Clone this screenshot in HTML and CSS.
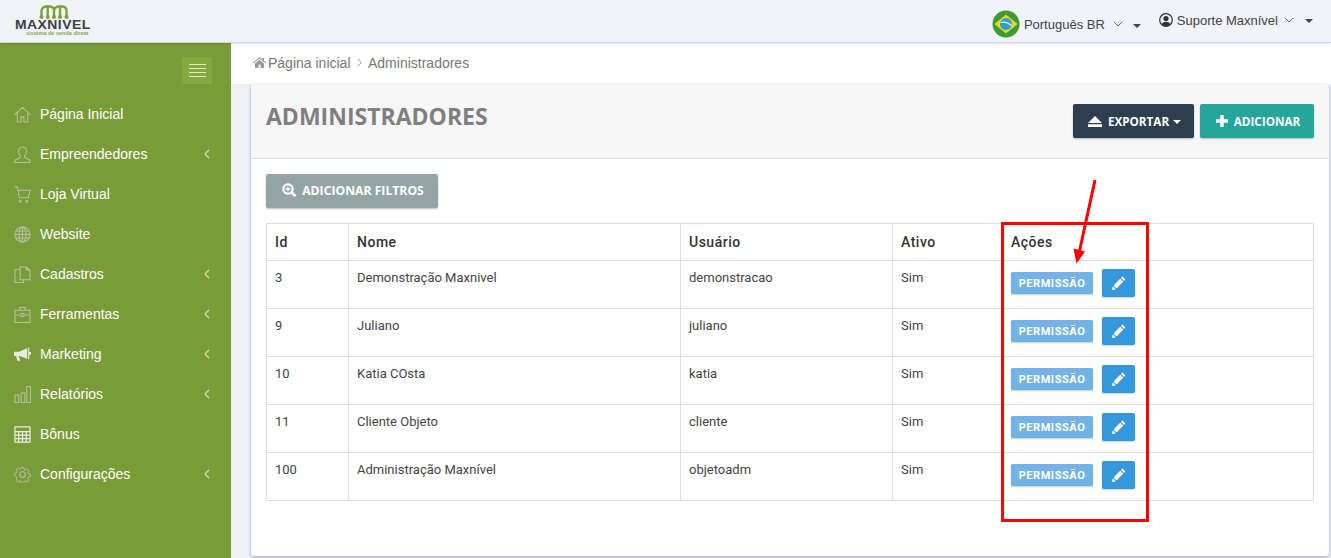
FILE: index.html
```html
<!DOCTYPE html>
<html lang="pt-BR">
<head>
<meta charset="utf-8">
<title>Administradores</title>
<link rel="stylesheet" href="styles.css">
</head>
<body>
<div class="app">
  <header class="topbar">
    <div class="logo">
      <svg class="logo-mark" width="30" height="15" viewBox="0 0 30 15" fill="none" stroke="#7da13a" stroke-width="2.4">
        <path d="M2.500 12V7a4.500 4.500 0 0 1 4.500-4.500h4A4 4 0 0 1 15 7v5M15 7a4.500 4.500 0 0 1 4.500-4.500h3.500A4 4 0 0 1 27.500 7v5M8.700 3v9M21 3v9"/>
        <g fill="#7da13a" stroke="none"><circle cx="2.500" cy="13" r="2"/><circle cx="8.700" cy="13" r="2"/><circle cx="15" cy="13" r="2"/><circle cx="21" cy="13" r="2"/><circle cx="27.500" cy="13" r="2"/></g>
      </svg>
      <div class="logo-name">MAXNIVEL</div>
      <div class="logo-sub">sistema de venda direta</div>
    </div>
    <div class="top-right">
      <div class="lang">
        <svg width="28" height="28" viewBox="0 0 28 28">
          <circle cx="14" cy="14" r="13.500" fill="#3d9a35"/>
          <path d="M14 4.500 25.500 14 14 23.500 2.500 14z" fill="#f1d524"/>
          <circle cx="14" cy="14" r="6" fill="#2f9fd0"/>
          <path d="M8.500 12.500q6-1.500 11 3" stroke="#dff" stroke-width="1.200" fill="none"/>
        </svg>
        <span>Português BR</span>
        <svg class="chev" width="10" height="6" viewBox="0 0 10 6"><path d="M1 1l4 4 4-4" fill="none" stroke="#666" stroke-width="1"/></svg>
        <i class="caret"></i>
      </div>
      <div class="user">
        <svg width="14" height="14" viewBox="0 0 14 14"><circle cx="7" cy="7" r="6.300" fill="none" stroke="#333" stroke-width="1.200"/><circle cx="7" cy="5.500" r="2.600" fill="#333"/><path d="M2.800 11.500a4.300 3.500 0 0 1 8.400 0A6 6 0 0 1 2.800 11.500z" fill="#333"/></svg>
        <span>Suporte Maxnível</span>
        <svg class="chev" width="10" height="6" viewBox="0 0 10 6"><path d="M1 1l4 4 4-4" fill="none" stroke="#666" stroke-width="1"/></svg>
        <i class="caret"></i>
      </div>
    </div>
  </header>
  <div class="body">
    <aside class="sidebar">
      <div class="burger-row"><button class="burger"><i></i><i></i><i></i><i></i></button></div>
      <nav class="menu">
        <a class="item"><svg class="ico" viewBox="0 0 18 18"><path d="M.5 9.500 9 1.500l8.500 8M3.500 7.500v9.500h4v-5.500h3V17h4V7.500"/></svg><span>Página Inicial</span></a>
        <a class="item"><svg class="ico" viewBox="0 0 18 18"><path d="M9 1c2.900 0 4.200 2.200 4.200 4.800 0 2.100-1 3.700-2 4.700v1.700L17 15v2.500H1V15l5.800-2.800v-1.700c-1-1-2-2.600-2-4.700C4.800 3.200 6.100 1 9 1z"/></svg><span>Empreendedores</span><svg class="arrow" viewBox="0 0 6 10"><path d="M5 1 1 5l4 4"/></svg></a>
        <a class="item"><svg class="ico" viewBox="0 0 18 18"><path d="M.5 1h3l2.200 11.500h9.500l2-8H4.300M6.500 15.500a.9.900 0 1 0 .1 0zM13.500 15.500a.9.900 0 1 0 .1 0z"/></svg><span>Loja Virtual</span></a>
        <a class="item"><svg class="ico" viewBox="0 0 18 18"><circle cx="9" cy="9" r="8"/><ellipse cx="9" cy="9" rx="3.800" ry="8"/><path d="M9 1v16M1 9h16M2.200 5.300h13.600M2.200 12.700h13.600"/></svg><span>Website</span></a>
        <a class="item"><svg class="ico" viewBox="0 0 18 18"><path d="M6.500 4H1v13.500h9V14.500M6.500 1H13v3.500h4v10H6.500zM13 1l4 3.500"/></svg><span>Cadastros</span><svg class="arrow" viewBox="0 0 6 10"><path d="M5 1 1 5l4 4"/></svg></a>
        <a class="item"><svg class="ico" viewBox="0 0 18 18"><path d="M1 4.500h16v13H1zM6 4.500V1.500h6v3M1 9.500h6.500M10.500 9.500H17M7.500 8h3v3h-3z"/></svg><span>Ferramentas</span><svg class="arrow" viewBox="0 0 6 10"><path d="M5 1 1 5l4 4"/></svg></a>
        <a class="item"><svg class="ico ico-solid" viewBox="0 0 18 18"><path d="M0 6h5.500L14 2v11.500L6 10.500H5.200l1.300 5H3.500L2.200 10.500H0z"/><path d="M15 1.500h1.200v12.500H15zM16.200 6.300H18v3h-1.800z"/></svg><span>Marketing</span><svg class="arrow" viewBox="0 0 6 10"><path d="M5 1 1 5l4 4"/></svg></a>
        <a class="item"><svg class="ico" viewBox="0 0 18 18"><path d="M1 9.500h4v8H1zM7.500 7.500h4v10h-4zM13.500.5h4v17h-4z"/></svg><span>Relatórios</span><svg class="arrow" viewBox="0 0 6 10"><path d="M5 1 1 5l4 4"/></svg></a>
        <a class="item"><svg class="ico ico-calc" viewBox="0 0 18 18"><path d="M1 1h16v16H1zM1 6h16M1 9.700h16M1 13.300h16M5 6v11M9 6v11M13 6v11"/></svg><span>Bônus</span></a>
        <a class="item"><svg class="ico" viewBox="0 0 18 18"><circle cx="9" cy="9" r="3"/><path d="M7.600 1h2.800l.4 2.300 1.600.7 1.900-1.300 2 2-1.300 1.900.7 1.600 2.300.4v2.800l-2.300.4-.7 1.600 1.300 1.900-2 2-1.900-1.300-1.600.7-.4 2.300H7.600l-.4-2.300-1.600-.7-1.900 1.300-2-2 1.300-1.900-.7-1.600L0 10.400V7.600l2.300-.4.700-1.600-1.300-1.900 2-2 1.900 1.300 1.600-.7z" transform="translate(.5 .5) scale(.945)"/></svg><span>Configurações</span><svg class="arrow" viewBox="0 0 6 10"><path d="M5 1 1 5l4 4"/></svg></a>
      </nav>
    </aside>
    <main class="main">
      <div class="crumbs">
        <svg width="13" height="11" viewBox="0 0 13 11"><path d="M6.500 0 0 5.500l.7.800L6.500 1.500l5.800 4.800.7-.8-2-1.700V1h-1.600v1.400zM2 6.500V11h3.400V7.800h2.200V11H11V6.500L6.500 2.700z" fill="#9a9a9a"/></svg>
        <a>Página inicial</a>
        <svg width="7" height="9" viewBox="0 0 7 9"><path d="M1.500 1 5.500 4.500 1.500 8" fill="none" stroke="#999" stroke-width="1"/></svg>
        <a>Administradores</a>
      </div>
      <section class="card">
        <div class="card-head">
          <h1>ADMINISTRADORES</h1>
          <div class="head-actions">
            <button class="btn btn-dark">
              <svg width="14" height="11" viewBox="0 0 14 11"><path d="M7 0 14 7H0zM0 8.300h14V11H0z" fill="#fff"/></svg>
              <span>EXPORTAR</span><i class="caret caret-w"></i>
            </button>
            <button class="btn btn-teal">
              <svg width="12" height="12" viewBox="0 0 12 12"><path d="M4.300 0h3.400v4.300H12v3.400H7.700V12H4.300V7.700H0V4.300h4.300z" fill="#fff"/></svg>
              <span>ADICIONAR</span>
            </button>
          </div>
        </div>
        <div class="card-body">
          <button class="btn btn-grey">
            <svg width="15" height="14" viewBox="0 0 15 14"><circle cx="6" cy="6" r="4.700" fill="none" stroke="#fff" stroke-width="2.200"/><path d="M9.500 9.500 13.500 13" stroke="#fff" stroke-width="2.800"/><path d="M3.700 6h4.600M6 3.700v4.600" stroke="#fff" stroke-width="1.300"/></svg>
            <span>ADICIONAR FILTROS</span>
          </button>
          <div class="table-wrap">
            <table class="grid">
              <colgroup><col class="c1"><col class="c2"><col class="c3"><col class="c4"><col></colgroup>
              <thead><tr><th>Id</th><th>Nome</th><th>Usuário</th><th>Ativo</th><th>Ações</th></tr></thead>
              <tbody>
                <tr><td>3</td><td>Demonstração Maxnivel</td><td>demonstracao</td><td>Sim</td><td><div class="acts"><button class="perm">PERMISSÃO</button><button class="edit"><svg width="16" height="16" viewBox="0 0 16 16"><path d="M11.500 1.500 14.500 4.500 13 6 10 3zM9.200 3.800l3 3L5.500 13.500 2.500 10.500zM1.800 11.300 4.700 14.200 1 15z" fill="#fff"/></svg></button></div></td></tr>
                <tr><td>9</td><td>Juliano</td><td>juliano</td><td>Sim</td><td><div class="acts"><button class="perm">PERMISSÃO</button><button class="edit"><svg width="16" height="16" viewBox="0 0 16 16"><path d="M11.500 1.500 14.500 4.500 13 6 10 3zM9.200 3.800l3 3L5.500 13.500 2.500 10.500zM1.800 11.300 4.700 14.200 1 15z" fill="#fff"/></svg></button></div></td></tr>
                <tr><td>10</td><td>Katia COsta</td><td>katia</td><td>Sim</td><td><div class="acts"><button class="perm">PERMISSÃO</button><button class="edit"><svg width="16" height="16" viewBox="0 0 16 16"><path d="M11.500 1.500 14.500 4.500 13 6 10 3zM9.200 3.800l3 3L5.500 13.500 2.500 10.500zM1.800 11.300 4.700 14.200 1 15z" fill="#fff"/></svg></button></div></td></tr>
                <tr><td>11</td><td>Cliente Objeto</td><td>cliente</td><td>Sim</td><td><div class="acts"><button class="perm">PERMISSÃO</button><button class="edit"><svg width="16" height="16" viewBox="0 0 16 16"><path d="M11.500 1.500 14.500 4.500 13 6 10 3zM9.200 3.800l3 3L5.500 13.500 2.500 10.500zM1.800 11.300 4.700 14.200 1 15z" fill="#fff"/></svg></button></div></td></tr>
                <tr><td>100</td><td>Administração Maxnível</td><td>objetoadm</td><td>Sim</td><td><div class="acts"><button class="perm">PERMISSÃO</button><button class="edit"><svg width="16" height="16" viewBox="0 0 16 16"><path d="M11.500 1.500 14.500 4.500 13 6 10 3zM9.200 3.800l3 3L5.500 13.500 2.500 10.500zM1.800 11.300 4.700 14.200 1 15z" fill="#fff"/></svg></button></div></td></tr>
              </tbody>
            </table>
          </div>
        </div>
      </section>
    </main>
  </div>
  <div class="mark-box"></div>
  <svg class="mark-arrow" width="30" height="90" viewBox="0 0 30 90"><path d="M24 1 8.500 72" stroke="#f00" stroke-width="3" fill="none"/><path d="M2.500 69.500 14 72.500 5.500 84.500z" fill="#f00"/></svg>
</div>
</body>
</html>
```
FILE: styles.css
```css
* { box-sizing: border-box; }
html, body { margin: 0; height: 100%; overflow: hidden; }
body { font-family: "Liberation Sans", Arial, sans-serif; font-size: 14px; color: #333; background: #edf0f6; }
.app { position: relative; width: 1331px; height: 558px; display: flex; flex-direction: column; }

.topbar { height: 43px; flex: none; display: flex; justify-content: space-between; background: #f0f3f8; border-bottom: 1px solid #d4d4d6; position: relative; z-index: 2; box-shadow: 0 1px 2px rgba(0,0,0,.12); }
.logo { width: 231px; padding: 4px 0 0 15px; display: flex; flex-direction: column; align-items: flex-start; }
.logo-mark { display: block; margin-left: 24px; }
.logo-name { font-weight: 700; font-size: 12px; line-height: 10px; letter-spacing: .4px; color: #3a3f44; transform: scaleX(1.16); transform-origin: left; margin-top: 1px; }
.logo-sub { font-size: 5.500px; line-height: 6px; font-weight: 700; color: #8aa84c; margin-left: 11px; white-space: nowrap; }
.top-right { display: flex; padding-right: 18px; color: #444; font-size: 13px; }
.lang { display: flex; align-items: center; padding-top: 5px; height: 43px; }
.lang span { margin-left: 4px; }
.lang .chev { margin-left: 8px; }
.lang .caret { margin-left: 10px; margin-top: 3px; }
.user { display: flex; align-items: center; height: 40px; margin-left: 18px; }
.user span { margin-left: 4px; }
.user .chev { margin-left: 6px; }
.user .caret { margin-left: 11px; margin-top: 2px; }
.caret { display: inline-block; width: 0; height: 0; border-left: 4px solid transparent; border-right: 4px solid transparent; border-top: 4px solid #444; }
.caret-w { border-top-color: #fff; margin-left: -2px; margin-top: 1px; }

.body { flex: 1; display: flex; min-height: 0; }
.sidebar { width: 231px; flex: none; background: #7a9c38; }
.burger-row { display: flex; justify-content: flex-end; padding: 14px 19px 0 0; }
.burger { width: 30px; height: 27px; border: 0; border-radius: 2px; background: #86a93f; display: flex; flex-direction: column; justify-content: center; gap: 3px; align-items: center; padding: 0; }
.burger i { display: block; width: 17px; height: 1px; background: #e4eccf; }
.menu { display: flex; flex-direction: column; margin-top: 10px; }
.item { height: 40px; display: flex; align-items: center; padding: 0 21px 0 14px; color: #fff; font-size: 14px; }
.item span { flex: 1; margin-left: 9px; }
.ico { width: 17px; height: 17px; fill: none; stroke: #b9bfa6; stroke-width: 1.100; }
.ico-solid { fill: #e8ebe0; stroke: none; }
.ico-calc { stroke: #e8ebe0; stroke-width: 1.300; }
.arrow { width: 6px; height: 10px; fill: none; stroke: #d3dcbc; stroke-width: 1.200; }

.main { flex: 1; min-width: 0; display: flex; flex-direction: column; }
.crumbs { height: 41px; flex: none; background: #fff; display: flex; align-items: center; gap: 2px; padding: 0 0 2px 22px; color: #777; font-size: 14px; }
.crumbs svg:nth-of-type(2) { margin: 0 3.500px 0 3px; }
.card { flex: 1; margin: 0 2px 2px 20px; background: #fff; border-radius: 3px; box-shadow: 0 1px 3px rgba(0,0,0,.35); }
.card-head { height: 75px; background: #f7f7f7; border-bottom: 1px solid #ddd; display: flex; justify-content: space-between; padding: 20px 15px 0; border-radius: 3px 3px 0 0; }
.card-head h1 { margin: -1px 0 0; font: 700 23px/26px "Open Sans", sans-serif; color: #7f7f7f; }
.head-actions { display: flex; gap: 6px; }
.btn { height: 34px; border: 0; border-radius: 2px; color: #fff; font: 700 11.700px "Open Sans", sans-serif; display: inline-flex; align-items: center; justify-content: center; gap: 6px; padding: 0 0 0 2px; box-shadow: 0 1px 2px rgba(0,0,0,.25); }
.btn-dark { width: 121px; background: #2c3e50; }
.btn-teal { width: 114px; background: #26a69a; }
.btn-grey { width: 172px; background: #95a5a6; gap: 5px; font-size: 12.200px; padding-bottom: 2px; }
.card-body { padding: 15px 15px 0; }
.table-wrap { margin-top: 15px; }
.grid { width: 100%; border-collapse: collapse; table-layout: fixed; font-family: Roboto, sans-serif; font-size: 13px; color: #444; }
.grid th, .grid td { border: 1px solid #ddd; text-align: left; vertical-align: top; padding: 8px; }
.grid th { height: 37px; font-weight: 500; font-size: 14px; letter-spacing: .5px; color: #333; padding-top: 10px; }
.grid td { height: 48px; padding-top: 9px; }
.c1 { width: 82px; } .c2 { width: 332px; } .c3 { width: 212px; } .c4 { width: 110px; }
.acts { display: flex; align-items: center; gap: 9px; margin-top: -1px; }
.perm { width: 82px; height: 22px; border: 0; border-radius: 2px; background: #73b2e6; color: #fff; font: 700 11px Roboto, sans-serif; letter-spacing: .55px; padding: 0; box-shadow: 0 1px 2px rgba(0,0,0,.2); }
.edit { width: 33px; height: 28px; border: 0; border-radius: 2px; background: #3498db; display: flex; align-items: center; justify-content: center; padding: 0; box-shadow: 0 1px 2px rgba(0,0,0,.2); }

.mark-box { position: absolute; left: 1001px; top: 222px; width: 148px; height: 300px; border: 3px solid #f00; }
.mark-arrow { position: absolute; left: 1071px; top: 179px; }
```
